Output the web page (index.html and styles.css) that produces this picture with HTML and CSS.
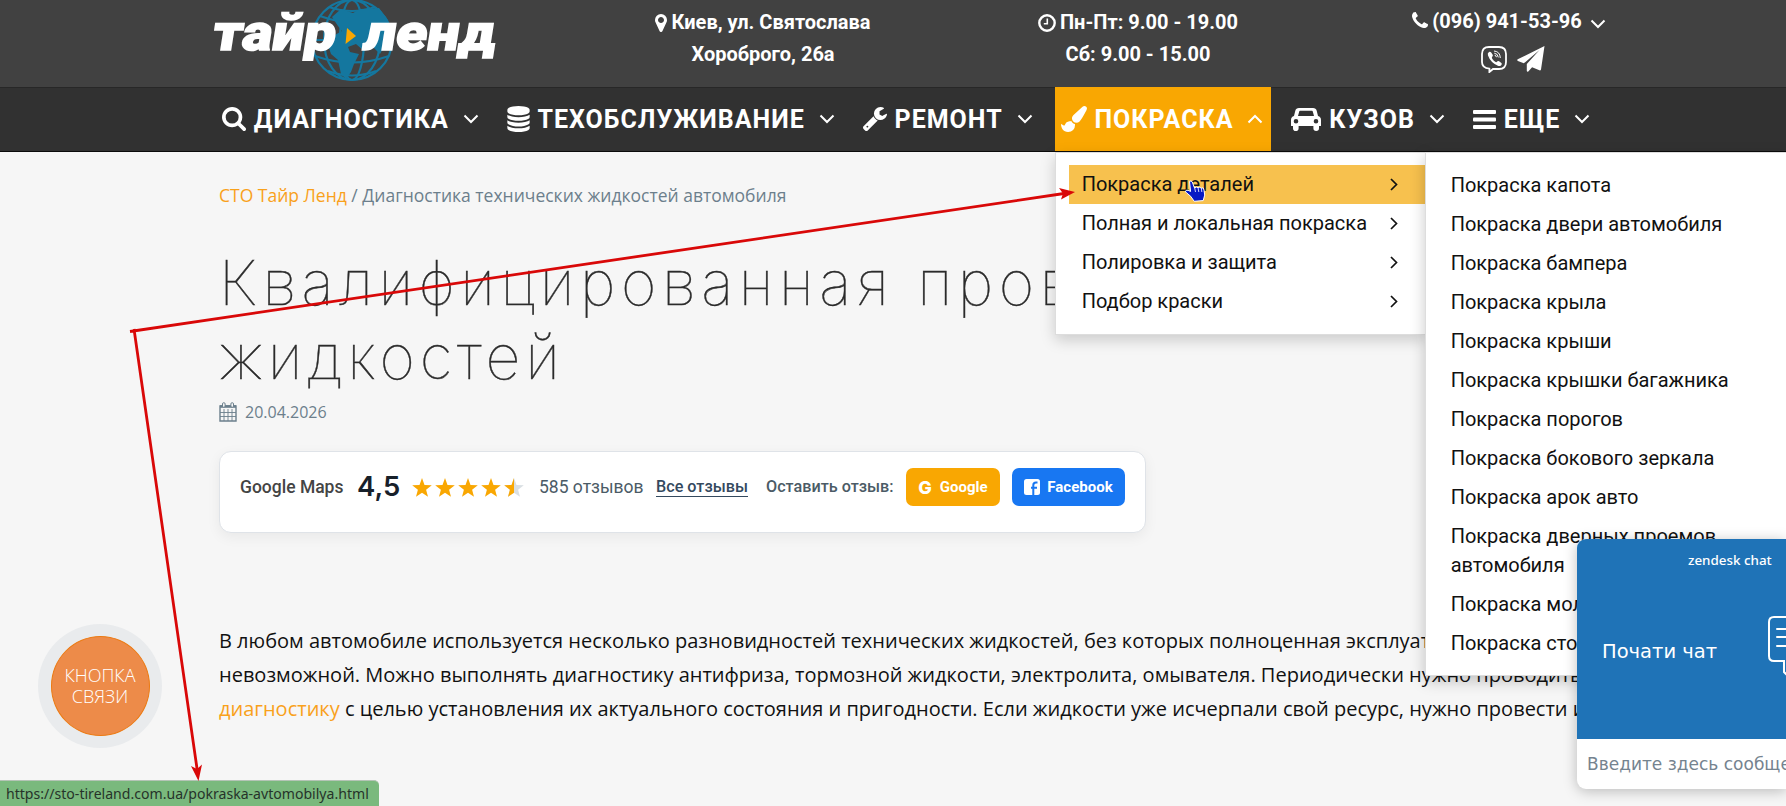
FILE: index.html
```html
<!DOCTYPE html>
<html lang="ru">
<head>
  <meta charset="UTF-8" />
  <meta name="viewport" content="width=device-width, initial-scale=1.0"/>
  <title>СТО Тайр Ленд</title>
  <link rel="stylesheet" href="styles.css">
</head>
<body>
  <!-- иконки -->
  <svg width="0" height="0" class="sprite">
    <symbol id="i-search" viewBox="64 128 1664 1664"><path d="M1216 832q0-185-131.500-316.500T768 384 451.500 515.500 320 832t131.500 316.500T768 1280t316.500-131.500T1216 832zm512 832q0 52-38 90t-90 38q-54 0-90-38l-343-342q-179 124-399 124-143 0-273.500-55.500t-225-150-150-225T64 832t55.500-273.500 150-225 225-150T768 128t273.500 55.500 225 150 150 225T1472 832q0 220-124 399l343 343q37 37 37 90z"/></symbol>
    <symbol id="i-database" viewBox="128 0 1536 1792"><path d="M896 768q237 0 443-43t325-127v170q0 69-103 128t-280 93.500-385 34.500-385-34.500T231 896 128 768V598q119 84 325 127t443 43zm0 768q237 0 443-43t325-127v170q0 69-103 128t-280 93.500-385 34.500-385-34.500-280-93.500-103-128v-170q119 84 325 127t443 43zm0-384q237 0 443-43t325-127v170q0 69-103 128t-280 93.500-385 34.500-385-34.500-280-93.500-103-128V982q119 84 325 127t443 43zM896 0q208 0 385 34.500t280 93.500 103 128v128q0 69-103 128t-280 93.500T896 640t-385-34.500T231 512 128 384V256q0-69 103-128t280-93.500T896 0z"/></symbol>
    <symbol id="i-wrench" viewBox="85 128 1643 1643"><path d="M448 1472q0-26-19-45t-45-19-45 19-19 45 19 45 45 19 45-19 19-45zm644-420l-682 682q-37 37-90 37-52 0-91-37L123 1626q-38-36-38-90 0-53 38-91l681-681q39 98 114.500 173.500T1092 1052zm634-435q0 39-23 106-47 134-164.500 217.500T1280 1024q-185 0-316.500-131.500T832 576t131.500-316.500T1280 128q58 0 121.500 16.500T1509 191q16 11 16 28t-16 28l-293 169v224l193 107q5-3 79-48.500t135.500-81T1694 582q15 0 23.500 10t8.500 25z"/></symbol>
    <symbol id="i-brush" viewBox="0 0 1792 1792"><path d="M1615 0q70 0 122.500 46.500T1790 163q0 63-45 151-332 629-465 752-97 91-218 91-126 0-216.500-92.500T755 845q0-128 92-212l638-579q59-54 130-54zM706 1034q39 76 106.500 130t150.500 76l1 71q4 213-129.500 347T487 1792q-123 0-218-46.500T116.500 1618 29 1434.500 0 1222q7 5 41 30t62 44.500 59 36.500 46 17q41 0 55-37 25-66 57.500-112.500t69.500-76 88-47.500 103-25.500 125-17.500z"/></symbol>
    <symbol id="i-car" viewBox="0 0 30 23"><path fill-rule="evenodd" d="M8 0h14q3 0 3.700 2.800L27 8q3 .8 3 4v5.500q0 .5-.5.500H28v2.200a2.800 2.800 0 0 1-5.600 0V18H7.600v2.200a2.800 2.800 0 0 1-5.600 0V18H.5q-.5 0-.5-.5V12q0-3.200 3-4l1.300-5.200Q5 0 8 0zm.3 3.200L7 8h16l-1.300-4.800q-.1-.4-.6-.4H8.900q-.5 0-.6.4zM5 11a2.300 2.300 0 1 0 0 4.600A2.300 2.300 0 0 0 5 11zm20 0a2.300 2.300 0 1 0 0 4.600 2.300 2.300 0 0 0 0-4.600z"/></symbol>
    <symbol id="i-bars" viewBox="0 0 23 19"><rect width="23" height="4" rx="1"/><rect y="7.500" width="23" height="4" rx="1"/><rect y="15" width="23" height="4" rx="1"/></symbol>
    <symbol id="i-marker" viewBox="384 128 1024 1536"><path d="M1152 640q0-106-75-181t-181-75-181 75-75 181 75 181 181 75 181-75 75-181zm256 0q0 109-33 179l-364 774q-16 33-47.500 52t-67.500 19-67.500-19-46.500-52L417 819q-33-70-33-179 0-212 150-362t362-150 362 150 150 362z"/></symbol>
    <symbol id="i-clock" viewBox="0 0 18 18"><circle cx="9" cy="9" r="7.700" fill="none" stroke="currentColor" stroke-width="2.400"/><path d="M9.300 4.500v5.200H5.800" fill="none" stroke="currentColor" stroke-width="1.600"/></symbol>
    <symbol id="i-phone" viewBox="192 128 1408 1408"><path d="M1600 1240q0 27-10 70.500t-21 68.500q-21 50-122 106-94 51-186 51-27 0-53-3.500t-57.500-12.500-47-14.500T1048 1486t-49-18q-98-35-175-83-127-79-264-216T344 905q-48-77-83-175-3-9-18-49t-20.500-55.500-14.500-47-12.500-57.500T192 468q0-92 51-186 56-101 106-122 25-11 68.500-21t70.500-10q14 0 21 3 18 6 53 76 11 19 30 54t35 63.500 31 53.500q3 4 17.500 25t21.500 35.500 7 28.500q0 20-28.500 50t-62 55-62 53-28.500 46q0 9 5 22.500t8.500 20.500 14 24 11.500 19q76 137 174 235t235 174q2 1 19 11.500t24 14 20.500 8.500 22.500 5q18 0 46-28.500t53-62 55-62 50-28.500q14 0 28.500 7t35.500 21.500 25 17.500q25 15 53.500 31t63.500 35 54 30q70 35 76 53 3 7 3 21z"/></symbol>
    <symbol id="i-down" viewBox="0 0 16 10"><path d="M1.500 1.500L8 8l6.500-6.500" fill="none" stroke="currentColor" stroke-width="2"/></symbol>
    <symbol id="i-right" viewBox="0 0 8 13"><path d="M1 1l5.500 5.500L1 12" fill="none" stroke="currentColor" stroke-width="1.700"/></symbol>
    <symbol id="i-star" viewBox="0 0 20 19"><path d="M10 0l2.500 6.900 7.300.3-5.700 4.600 1.900 7L10 14.800l-6 4 1.900-7L.2 7.200l7.300-.3z"/></symbol>
  </svg>

  <header class="header">
    <svg class="logo" width="290" height="87" viewBox="0 0 290 87">
      <g fill="none" stroke="#14779f" stroke-width="2.200">
        <circle cx="142" cy="40" r="40"/>
        <ellipse cx="142" cy="40" rx="28" ry="40"/>
        <ellipse cx="142" cy="40" rx="12" ry="40"/>
        <path d="M110 16q32 12 64 0M102 40h80M105 56q37 13 74 0M118 71q24 9 48 0M119 7q23 8 46 0"/>
      </g>
      <path fill="#14779f" d="M122 17l9-8 12 4 7-4 19-1 9 12 5 18-9 9-4 7-9-9-7 6-8-7-8 3 2 5 9 2-5 10-3 8-5 7-5-5-3-14-7-6-3-9 5-9 9-5-4-5z"/>
      <path fill="#f9a702" d="M137 28l9 8-10.500 8z"/>
      <g class="logo-text">
        <text transform="translate(1 50) skewX(-9)" textLength="123" lengthAdjust="spacingAndGlyphs">тайр</text>
        <text transform="translate(152 50) skewX(-9)" textLength="132" lengthAdjust="spacingAndGlyphs">ленд</text>
      </g>
    </svg>
    <div class="info address">
      <div><svg class="ic-marker"><use href="#i-marker"/></svg>Киев, ул. Святослава</div>
      <div>Хороброго, 26а</div>
    </div>
    <div class="info hours">
      <div><svg class="ic-clock"><use href="#i-clock"/></svg>Пн-Пт: 9.00 - 19.00</div>
      <div>Сб: 9.00 - 15.00</div>
    </div>
    <div class="info phones">
      <div><svg class="ic-phone"><use href="#i-phone"/></svg>(096) 941-53-96<svg class="ic-down"><use href="#i-down"/></svg></div>
      <div class="messengers">
        <svg width="26" height="27" viewBox="0 0 26 27" fill="none" stroke="#fff">
          <path stroke-width="1.800" d="M8 1h10q7 0 7 7v8q0 7-7 7h-6l-3.600 3v-3.300Q1 22 1 16V8q0-7 7-7z"/>
          <path fill="#fff" stroke="none" d="M8 6q1.200-.8 2.200.5l1.500 2.300q.6 1.100-.6 2.200-.7.700.3 2 1.300 2 3.200 3 .9.400 1.500-.4.800-1 2-.3l2.300 1.700q1 1-.2 2.200-1.500 1.400-3.300.6Q9.500 16.500 7 9.500 6.100 7.300 8 6z"/>
          <path stroke-width="1" d="M13 5q6 .4 6.300 7M13.300 7.200q3.700.4 4 4.200M13.700 9.300q1.600.1 1.700 1.900"/>
        </svg>
        <svg width="28" height="26" viewBox="0 0 28 26" fill="#fff">
          <path d="M27.500 0L24 23.500q-.4 1.200-1.600.8l-7.300-3-3.800 4.200q-1 .8-1.500-.4V18L22.500 4 6.800 17.300.9 14.900q-1.300-.7-.2-1.600z"/>
        </svg>
      </div>
    </div>
  </header>

  <nav class="nav">
    <a class="nav-item"><svg width="24" height="24"><use href="#i-search"/></svg><span>ДИАГНОСТИКА</span><svg class="chev"><use href="#i-down"/></svg></a>
    <a class="nav-item"><svg width="23" height="26"><use href="#i-database"/></svg><span>ТЕХОБСЛУЖИВАНИЕ</span><svg class="chev"><use href="#i-down"/></svg></a>
    <a class="nav-item"><svg width="24" height="24"><use href="#i-wrench"/></svg><span>РЕМОНТ</span><svg class="chev"><use href="#i-down"/></svg></a>
    <div class="nav-item active">
      <svg width="26" height="26"><use href="#i-brush"/></svg><span>ПОКРАСКА</span><svg class="chev up"><use href="#i-down"/></svg>
      <div class="dropdown">
        <a class="hover">Покраска деталей<svg><use href="#i-right"/></svg></a>
        <a>Полная и локальная покраска<svg><use href="#i-right"/></svg></a>
        <a>Полировка и защита<svg><use href="#i-right"/></svg></a>
        <a>Подбор краски<svg><use href="#i-right"/></svg></a>
        <div class="submenu">
          <a>Покраска капота</a>
          <a>Покраска двери автомобиля</a>
          <a>Покраска бампера</a>
          <a>Покраска крыла</a>
          <a>Покраска крыши</a>
          <a>Покраска крышки багажника</a>
          <a>Покраска порогов</a>
          <a>Покраска бокового зеркала</a>
          <a>Покраска арок авто</a>
          <a>Покраска дверных проемов автомобиля</a>
          <a>Покраска мол</a>
          <a>Покраска сто</a>
        </div>
      </div>
    </div>
    <a class="nav-item"><svg width="30" height="23"><use href="#i-car"/></svg><span>КУЗОВ</span><svg class="chev"><use href="#i-down"/></svg></a>
    <a class="nav-item"><svg width="23" height="19"><use href="#i-bars"/></svg><span>ЕЩЕ</span><svg class="chev"><use href="#i-down"/></svg></a>
  </nav>

  <main class="content">
    <div class="breadcrumbs"><a>СТО Тайр Ленд</a> / Диагностика технических жидкостей автомобиля</div>
    <h1><span>Квалифицированная пров</span><br>жидкостей</h1>
    <div class="date">
      <svg width="18" height="20" viewBox="0 0 18 20" fill="none" stroke="#6b7f8c">
        <path stroke-width="1.400" d="M1 4h16v15H1z"/>
        <path stroke-width="2.600" d="M1 4.500h16"/>
        <path stroke-width=".9" d="M1 10.500h16M1 14.500h16M5 7v12M9 7v12M13 7v12"/>
        <rect x="3.500" y=".7" width="2.600" height="4.600" rx="1.200" fill="#f6f6f6"/>
        <rect x="11.900" y=".7" width="2.600" height="4.600" rx="1.200" fill="#f6f6f6"/>
      </svg>
      20.04.2026
    </div>

    <section class="reviews">
      <span class="maps">Google Maps</span>
      <span class="rating">4,5</span>
      <svg class="stars" width="112" height="19" viewBox="0 0 112 19" fill="#f9a702">
        <use href="#i-star" width="20" height="19"/>
        <use href="#i-star" x="23" width="20" height="19"/>
        <use href="#i-star" x="46" width="20" height="19"/>
        <use href="#i-star" x="69" width="20" height="19"/>
        <use href="#i-star" x="92" width="20" height="19" fill="#d9dfe3"/>
        <clipPath id="half"><rect x="92" width="10" height="19"/></clipPath>
        <g clip-path="url(#half)"><use href="#i-star" x="92" width="20" height="19"/></g>
      </svg>
      <span class="count">585 отзывов</span>
      <a class="all">Все отзывы</a>
      <span class="leave">Оставить отзыв:</span>
      <a class="btn google"><b>G</b>Google</a>
      <a class="btn facebook">
        <svg width="16" height="16" viewBox="0 0 16 16"><rect width="16" height="16" rx="2.500" fill="#fff"/><path d="M9.300 16V6.200q0-2.700 2.700-2.700h1.500M7 8.700h6" fill="none" stroke="#1877f2" stroke-width="2"/></svg>Facebook
      </a>
    </section>

    <p class="text">
      В любом автомобиле используется несколько разновидностей технических жидкостей, без которых полноценная эксплуат<br>
      невозможной. Можно выполнять диагностику антифриза, тормозной жидкости, электролита, омывателя. Периодически нужно проводить<br>
      <a>диагностику</a> с целью установления их актуального состояния и пригодности. Если жидкости уже исчерпали свой ресурс, нужно провести и
    </p>
  </main>

  <div class="callback"><div>КНОПКА<br>СВЯЗИ</div></div>

  <div class="chat">
    <div class="chat-head">
      <div class="brand">zendesk chat</div>
      <div class="start">Почати чат
        <svg width="18" height="62" viewBox="0 0 18 62" fill="none" stroke="#fff" stroke-width="2">
          <path d="M60 1H6Q1 1 1 6v34q0 5 5 5h10v11l4 4 14-15h26"/>
          <path d="M9 13h40M9 21h40M9 30h40" stroke-linecap="round"/>
        </svg>
      </div>
    </div>
    <div class="chat-input">Введите здесь сообще</div>
  </div>

  <div class="status">https://sto-tireland.com.ua/pokraska-avtomobilya.html</div>

  <!-- стрелки и курсор поверх страницы -->
  <svg class="overlay" width="1786" height="806" viewBox="0 0 1786 806">
    <g stroke="#d90808" stroke-width="2.800" fill="none">
      <path d="M130 331.500L1064 193.500M134 329L197.500 772"/>
    </g>
    <path fill="#d90808" d="M1075 192l-16-4 4 5.500-2 6zM198.500 781l-7.500-15 6 3 5-4.500z"/>
    <g transform="translate(-2 0)">
      <path fill="#0718c4" stroke="#fff" stroke-width="1" d="M1191.500 181.500q1.600-1.300 2.700.4l2.300 6 1.800-.8 1.800.6 1.600-.5 1.500.9 2-.2.8 2.200.7 5-1.500 5.500-9 .7-3.500-5-5.300-4.500q.2-2.300 2.700-1.500l2.500 1.200z"/>
      <path fill="none" stroke="#fff" stroke-width=".8" d="M1196.500 187l1 5M1200 187.500l.8 4.500M1203.300 188l.5 4"/>
    </g>
  </svg>
</body>
</html>
```
FILE: styles.css
```css
body {
  margin: 0;
  height: 806px;
  overflow: hidden;
  position: relative;
  background: #f6f6f6;
  font-family: Roboto, "Liberation Sans", sans-serif;
}

.sprite {
  position: absolute;
}

svg {
  flex: none;
}

svg:not([fill]) {
  fill: currentColor;
}

.header {
  display: flex;
  height: 87px;
  box-sizing: border-box;
  padding-left: 210px;
  background: #414141;
  color: #fff;
}

.logo-text {
  fill: #fff;
  stroke: #fff;
  stroke-width: 1.5px;
  font: 900 50px Roboto, sans-serif;
}

.info {
  padding-top: 6px;
  font-size: 20px;
  font-weight: 700;
  line-height: 32px;
  text-align: center;
  white-space: nowrap;
}

.address {
  width: 220px;
  margin-left: 153px;
}

.hours {
  width: 220px;
  margin-left: 155px;
}

.phones {
  width: 220px;
  margin-left: 151px;
  padding-top: 5px;
}

.ic-marker {
  width: 12px;
  height: 18px;
  margin-right: 4px;
  vertical-align: -3px;
}

.ic-clock {
  width: 18px;
  height: 18px;
  margin-right: 4px;
  vertical-align: -3px;
}

.ic-phone {
  width: 16px;
  height: 16px;
  margin-right: 4px;
  vertical-align: 0;
}

.ic-down {
  width: 16px;
  height: 10px;
  margin-left: 8px;
  vertical-align: -1px;
}

.messengers {
  display: flex;
  justify-content: center;
  gap: 10px;
  padding: 9px 0 0 8px;
}

.nav {
  display: flex;
  gap: 14px;
  height: 64px;
  padding-left: 216px;
  background: #313131;
  border-bottom: 1px solid #0b0b0b;
  box-shadow: inset 0 1px #272727;
  color: #fff;
}

.nav-item {
  display: flex;
  align-items: center;
  position: relative;
  padding: 0 8px 0 6px;
  font-size: 25px;
  font-weight: 700;
  letter-spacing: 1px;
  white-space: nowrap;
}

.nav-item span {
  margin: 0 14px 0 7.800px;
}

.chev {
  width: 16px;
  height: 10px;
}

.up {
  transform: rotate(180deg);
}

.active {
  background: #f9a702;
}

.dropdown {
  position: absolute;
  top: 65px;
  left: 0;
  width: 370px;
  height: 183px;
  box-sizing: border-box;
  padding: 12px 0 0 13px;
  background: #fff;
  border: 1px solid #ddd;
  border-right: 0;
  box-shadow: 0 5px 14px rgba(0, 0, 0, .18);
  color: #111;
  font-size: 20px;
  font-weight: 400;
  letter-spacing: 0;
  z-index: 5;
}

.dropdown > a {
  display: flex;
  align-items: center;
  justify-content: space-between;
  height: 38px;
  padding: 0 27px 1px 13px;
}

.dropdown > a svg {
  width: 8px;
  height: 13px;
}

.hover {
  background: #f7c14e;
}

.submenu {
  position: absolute;
  top: -1px;
  left: 369px;
  width: 363px;
  height: 524px;
  box-sizing: border-box;
  padding: 13px 20px 12px 25px;
  background: #fff;
  border: 1px solid #ddd;
  border-right: 0;
  box-shadow: 0 5px 14px rgba(0, 0, 0, .22);
}

.submenu a {
  display: block;
  padding: 5px 0;
  line-height: 29px;
  white-space: normal;
}

.content {
  padding: 28px 0 0 219px;
  white-space: nowrap;
}

.breadcrumbs {
  font: 400 17.500px/30px "Open Sans", sans-serif;
  color: #6c7f8c;
}

.breadcrumbs a,
.text a {
  color: #f9a11b;
}

h1 {
  margin: 36px 0 0;
  font: 100 61px/74px Inter, sans-serif;
  letter-spacing: 4.800px;
  color: #2b2b2b;
  -webkit-text-stroke: .4px #2b2b2b;
}

h1 span {
  letter-spacing: 5.600px;
}

.date {
  display: flex;
  align-items: center;
  gap: 8px;
  height: 26px;
  margin-top: 5px;
  font: 400 16px/26px "Open Sans", sans-serif;
  color: #6c7f8c;
}

.reviews {
  display: flex;
  align-items: flex-start;
  width: 927px;
  height: 82px;
  box-sizing: border-box;
  margin-top: 26px;
  padding: 16px 0 0 20px;
  background: #fff;
  border: 1px solid #dfe3e8;
  border-radius: 12px;
  box-shadow: 0 4px 14px rgba(0, 0, 0, .06);
  font-size: 17.500px;
  line-height: 38px;
  color: #4b5b66;
}

.maps {
  width: 117px;
  font-weight: 500;
  color: #444;
}

.rating {
  width: 55px;
  font: 600 27.500px/36px Inter, sans-serif;
  color: #17202a;
}

.stars {
  margin: 10px 15px 0 0;
}

.count {
  width: 117px;
}

.all {
  width: 92px;
  height: 28px;
  margin-right: 18px;
  border-bottom: 1px solid #34495e;
  font-size: 16.200px;
  font-weight: 500;
  color: #34495e;
}

.leave {
  width: 140px;
  font-size: 16.200px;
  font-weight: 500;
}

.btn {
  display: flex;
  align-items: center;
  justify-content: center;
  height: 38px;
  border-radius: 7px;
  font-size: 15px;
  font-weight: 700;
  color: #fff;
}

.google {
  width: 94px;
  gap: 8px;
  background: #f9a702;
}

.google b {
  font: 800 18px Inter, sans-serif;
}

.facebook {
  width: 113px;
  margin-left: 12px;
  gap: 7px;
  background: #1877f2;
}

.text {
  margin: 91px 0 0;
  font: 400 20px/34px "Open Sans", sans-serif;
  color: #111;
}

.callback {
  position: absolute;
  left: 38px;
  top: 624px;
  display: flex;
  align-items: center;
  justify-content: center;
  width: 124px;
  height: 124px;
  border-radius: 50%;
  background: #e9ebed;
}

.callback div {
  width: 97px;
  padding: 28px 0 29px;
  border: 1px solid #ec7a12;
  border-radius: 50%;
  background: #ed8b49;
  color: #fff;
  font: 300 18px/20.500px "Open Sans", sans-serif;
  text-align: center;
}

.chat {
  position: absolute;
  left: 1577px;
  top: 539px;
  width: 209px;
  height: 250px;
  border-radius: 9px 0 0 9px;
  background: #fff;
  overflow: hidden;
  box-shadow: 0 2px 14px rgba(0, 0, 0, .25);
  font-family: "DejaVu Sans", sans-serif;
  z-index: 8;
}

.chat-head {
  height: 200px;
  background: #1f73b7;
  color: #fff;
}

.brand {
  padding: 11px 0 0 111px;
  font: 500 13.400px/20px "Noto Sans", sans-serif;
}

.start {
  display: flex;
  justify-content: space-between;
  padding: 46px 0 0 25px;
  font-size: 19.500px;
  line-height: 72px;
  white-space: nowrap;
}

.chat-input {
  padding-left: 10px;
  font-size: 17px;
  line-height: 50px;
  color: #75838f;
  white-space: nowrap;
}

.status {
  position: absolute;
  left: 0;
  bottom: 0;
  width: 373px;
  padding-left: 6px;
  border-radius: 0 5px 0 0;
  border-top: 1px solid #b5c4b6;
  background: #7ab97d;
  color: #26332a;
  font: 400 14.080px/25px "Noto Sans", sans-serif;
}

.overlay {
  position: absolute;
  left: 0;
  top: 0;
  z-index: 10;
  pointer-events: none;
}
```
